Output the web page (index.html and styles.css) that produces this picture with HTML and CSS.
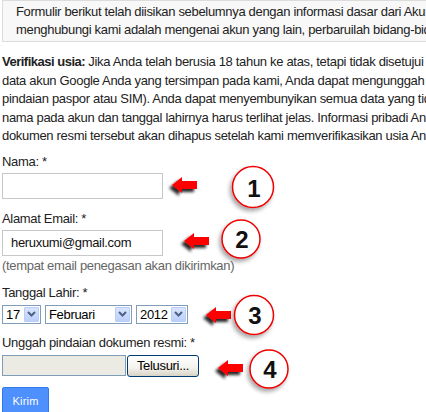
FILE: index.html
```html
<!DOCTYPE html>
<html lang="id">
<head>
<meta charset="utf-8">
<title>Verifikasi usia</title>
<link rel="stylesheet" href="styles.css">
</head>
<body>
<div class="page">
  <div class="notice">
    <div class="line">Formulir berikut telah diisikan sebelumnya dengan informasi dasar dari Akun Google Anda. Jika Anda</div>
    <div class="line">menghubungi kami adalah mengenai akun yang lain, perbaruilah bidang-bidang di bawah ini.</div>
  </div>

  <div class="intro">
    <div class="line"><b>Verifikasi usia:</b> Jika Anda telah berusia 18 tahun ke atas, tetapi tidak disetujui oleh sistem kami</div>
    <div class="line">data akun Google Anda yang tersimpan pada kami, Anda dapat mengunggah salinan dokumen resmi (misalnya</div>
    <div class="line">pindaian paspor atau SIM). Anda dapat menyembunyikan semua data yang tidak diperlukan, tetapi</div>
    <div class="line">nama pada akun dan tanggal lahirnya harus terlihat jelas. Informasi pribadi Anda aman bersama kami,</div>
    <div class="line">dokumen resmi tersebut akan dihapus setelah kami memverifikasikan usia Anda.</div>
  </div>

  <form class="form">
    <div class="field first">
      <label class="label" for="nama">Nama: *</label>
      <input class="text-input" id="nama" type="text">
    </div>

    <div class="field">
      <label class="label" for="email">Alamat Email: *</label>
      <input class="text-input" id="email" type="text" value="heruxumi@gmail.com">
      <div class="hint">(tempat email penegasan akan dikirimkan)</div>
    </div>

    <div class="field tight">
      <label class="label">Tanggal Lahir: *</label>
      <div class="selects">
        <div class="select s-day"><span class="sel-text">17</span><span class="sel-btn"><svg width="9" height="6" viewBox="0 0 9 6"><path d="M1 1 L4.5 4.5 L8 1" fill="none" stroke="#4d6185" stroke-width="2"/></svg></span></div>
        <div class="select s-month"><span class="sel-text">Februari</span><span class="sel-btn"><svg width="9" height="6" viewBox="0 0 9 6"><path d="M1 1 L4.5 4.5 L8 1" fill="none" stroke="#4d6185" stroke-width="2"/></svg></span></div>
        <div class="select s-year"><span class="sel-text">2012</span><span class="sel-btn"><svg width="9" height="6" viewBox="0 0 9 6"><path d="M1 1 L4.5 4.5 L8 1" fill="none" stroke="#4d6185" stroke-width="2"/></svg></span></div>
      </div>
    </div>

    <div class="field tight">
      <label class="label">Unggah pindaian dokumen resmi: *</label>
      <div class="file-row">
        <div class="file-box"></div>
        <div class="file-btn">Telusuri...</div>
      </div>
    </div>

    <div class="submit-row">
      <div class="submit">Kirim</div>
    </div>
  </form>

  <svg class="marks" width="426" height="412" viewBox="0 0 426 412">
    <defs>
      <filter id="ashadow" x="-50%" y="-50%" width="200%" height="200%">
        <feDropShadow dx="-3" dy="3" stdDeviation="1.6" flood-color="#000" flood-opacity="0.85"/>
      </filter>
      <filter id="cshadow" x="-50%" y="-50%" width="200%" height="200%">
        <feDropShadow dx="-2" dy="3" stdDeviation="2" flood-color="#000" flood-opacity="0.35"/>
      </filter>
      <path id="arrow" d="M0 0 L10 -8 L10 -4 L25 -4 L25 4 L10 4 L10 8 Z"/>
    </defs>

    <use href="#arrow" x="172" y="185" fill="#f00" filter="url(#ashadow)"/>
    <use href="#arrow" x="184" y="241" fill="#f00" filter="url(#ashadow)"/>
    <use href="#arrow" x="206" y="315" fill="#f00" filter="url(#ashadow)"/>
    <use href="#arrow" x="218" y="368" fill="#f00" filter="url(#ashadow)"/>

    <circle cx="253" cy="187" r="20.5" fill="#fff" stroke="#e00" stroke-width="1.5" filter="url(#cshadow)"/>
    <circle cx="241" cy="239" r="19" fill="#fff" stroke="#e00" stroke-width="1.5" filter="url(#cshadow)"/>
    <circle cx="254" cy="315" r="19.5" fill="#fff" stroke="#e00" stroke-width="1.5" filter="url(#cshadow)"/>
    <circle cx="269" cy="369" r="19" fill="#fff" stroke="#e00" stroke-width="1.5" filter="url(#cshadow)"/>

    <text class="num" x="254" y="197">1</text>
    <text class="num" x="242" y="248">2</text>
    <text class="num" x="255" y="324">3</text>
    <text class="num" x="270" y="378">4</text>
  </svg>
</div>
</body>
</html>
```

FILE: styles.css
```css
html, body {
  margin: 0;
  padding: 0;
  overflow: hidden;
  background: #fff;
}

body {
  width: 426px;
  height: 412px;
  font-family: "Liberation Sans", Arial, sans-serif;
  font-size: 13px;
  letter-spacing: -0.32px;
  color: #222;
}

.page {
  position: relative;
  width: 426px;
  height: 412px;
}

.line {
  white-space: nowrap;
}

.line b {
  letter-spacing: -0.5px;
}

.notice {
  width: 700px;
  margin-left: 2px;
  border: 1px solid #dcdcdc;
  background: #f8f8f8;
  padding: 2px 0 2px 13px;
  line-height: 18px;
}

.intro {
  margin: 11px 0 0 2px;
  line-height: 18.5px;
}

.form {
  margin: 0 0 0 2px;
}

.field {
  margin-top: 12px;
}

.field.first {
  margin-top: 8px;
}

.field.tight {
  margin-top: 11px;
}

.label {
  display: block;
  line-height: 16px;
  margin-bottom: 3px;
}

.field.tight .label {
  margin-bottom: 4px;
}

.text-input {
  display: block;
  box-sizing: border-box;
  width: 161px;
  height: 26px;
  margin: 0;
  padding: 0 0 0 8px;
  border: 1px solid #c8c8c8;
  font-family: "Liberation Sans", Arial, sans-serif;
  font-size: 13px;
  letter-spacing: -0.32px;
  color: #111;
  background: #fff;
}

.hint {
  margin-top: 2px;
  line-height: 16px;
  color: #666;
}

.selects {
  display: flex;
  gap: 4px;
}

.select {
  box-sizing: border-box;
  height: 19px;
  border: 1px solid #7f9db9;
  background: #fff;
  display: flex;
  align-items: center;
  justify-content: space-between;
  padding: 0 1px 0 3px;
  color: #000;
}

.s-day { width: 39px; }
.s-month { width: 87px; }
.s-year { width: 52px; }

.sel-text {
  line-height: 17px;
}

.sel-btn {
  width: 15px;
  height: 15px;
  box-sizing: border-box;
  border: 1px solid #b9cdf9;
  background: linear-gradient(#d9e4fd, #bccffa);
  border-radius: 1px;
  display: flex;
  align-items: center;
  justify-content: center;
}

.file-row {
  display: flex;
  gap: 1px;
}

.file-box {
  box-sizing: border-box;
  width: 124px;
  height: 21px;
  border: 1px solid #7f9db9;
  background: #ebebe4;
}

.file-btn {
  box-sizing: border-box;
  width: 72px;
  height: 22px;
  border: 1px solid #003c74;
  border-radius: 3px;
  background: linear-gradient(#ffffff, #f3f2ec 60%, #d8d3c5);
  color: #000;
  text-align: center;
  line-height: 20px;
}

.submit-row {
  margin-top: 10px;
}

.submit {
  box-sizing: border-box;
  width: 47px;
  height: 29px;
  background: #4d90fe;
  border: 1px solid #3079ed;
  border-radius: 2px;
  color: #fff;
  font-size: 11px;
  letter-spacing: 0.2px;
  text-align: center;
  line-height: 27px;
}

.marks {
  position: absolute;
  left: 0;
  top: 0;
  pointer-events: none;
}

.num {
  font-family: "Liberation Sans", Arial, sans-serif;
  font-weight: bold;
  font-size: 24px;
  letter-spacing: 0;
  fill: #111;
  text-anchor: middle;
}
```
